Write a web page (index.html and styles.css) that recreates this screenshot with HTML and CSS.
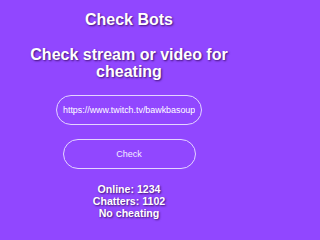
FILE: index.html
```html
<!DOCTYPE html>
<html lang="en">
<head>
<meta charset="utf-8">
<title>Check Bots</title>
<link rel="stylesheet" href="styles.css">
</head>
<body>
<main class="app">
  <h1 class="title">Check Bots</h1>
  <h2 class="subtitle">Check stream or video for cheating</h2>
  <input class="url-input" type="text" value="https://www.twitch.tv/bawkbasoup">
  <button class="check-btn" type="button">Check</button>
  <div class="stats">
    <div class="stat">Online: 1234</div>
    <div class="stat">Chatters: 1102</div>
    <div class="stat">No cheating</div>
  </div>
</main>
</body>
</html>
```
FILE: styles.css
```css
html, body {
  margin: 0;
  padding: 0;
  background: #9147ff;
  height: 100%;
}
body {
  font-family: "Liberation Sans", Arial, sans-serif;
  color: #ffffff;
}
.app {
  box-sizing: border-box;
  width: 250px;
  display: flex;
  flex-direction: column;
  align-items: center;
  text-align: center;
  padding: 11px 0 0 8px;
}
.title,
.subtitle,
.stats {
  text-shadow: 1px 1px 2px rgba(40, 0, 70, 0.75);
}
.title {
  margin: 0;
  font-size: 16px;
  font-weight: bold;
  line-height: 18px;
}
.subtitle {
  margin: 17px 0 0;
  font-size: 16px;
  font-weight: bold;
  line-height: 17px;
}
.url-input {
  box-sizing: border-box;
  margin-top: 15px;
  width: 146px;
  height: 30px;
  padding: 0 6px;
  border: 1px solid #e4d4ff;
  border-radius: 15px;
  background: transparent;
  color: #ffffff;
  font-family: "Liberation Sans", Arial, sans-serif;
  font-size: 8.9px;
  text-align: center;
  outline: none;
}
.check-btn {
  box-sizing: border-box;
  margin-top: 14px;
  width: 133px;
  height: 30px;
  border: 1px solid #e4d4ff;
  border-radius: 15px;
  background: transparent;
  color: #f4ecff;
  font-family: "Liberation Sans", Arial, sans-serif;
  font-size: 9px;
  padding: 0;
}
.stats {
  margin-top: 14px;
  font-size: 10.6px;
  font-weight: bold;
  line-height: 12px;
}
```
